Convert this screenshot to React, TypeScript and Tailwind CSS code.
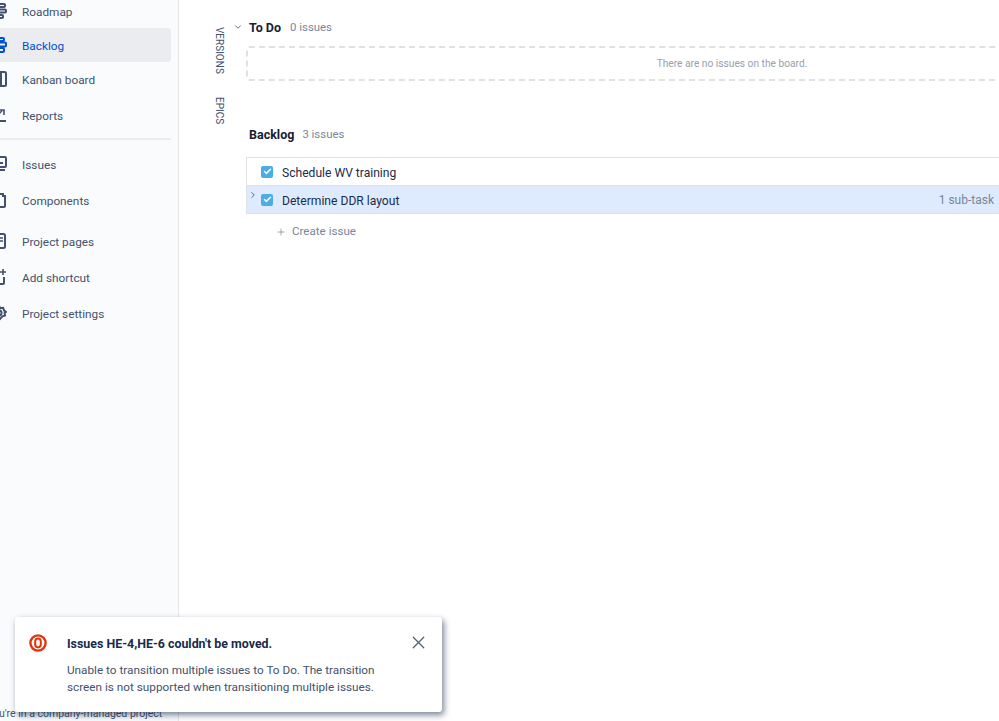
import React from 'react';
import { ChevronDown, ChevronRight, Plus, X, Check } from 'lucide-react';

const FONT = "font-['Roboto','Noto_Sans',sans-serif]";

const Icon: React.FC<{ name: string; color?: string }> = ({ name, color = '#42526E' }) => {
  const common = { width: 16, height: 16, viewBox: '0 0 16 16', fill: 'none', stroke: color, strokeWidth: 2, className: 'shrink-0' };
  switch (name) {
    case 'roadmap':
      return (
        <svg {...common}>
          <rect x="1" y="1" width="13" height="3" rx="1" />
          <rect x="5" y="6.5" width="10" height="3" rx="1" />
          <rect x="2" y="12" width="10" height="3" rx="1" />
        </svg>
      );
    case 'backlog':
      return (
        <svg {...common}>
          <rect x="3" y="1" width="10" height="3" rx="1" />
          <rect x="1" y="5.5" width="14" height="4" rx="1" />
          <rect x="3" y="11" width="10" height="4" rx="1" />
        </svg>
      );
    case 'kanban':
      return (
        <svg {...common}>
          <rect x="1" y="1" width="14" height="14" rx="1.5" />
          <path d="M10 1v14" />
        </svg>
      );
    case 'reports':
      return (
        <svg {...common}>
          <path d="M1 2v12h14" />
          <path d="M4 10l7-6M8 3h5v5" strokeWidth="1.6" />
        </svg>
      );
    case 'issues':
      return (
        <svg {...common}>
          <rect x="2" y="1" width="13" height="10" rx="1" />
          <path d="M8 7h4M1 14h13" />
        </svg>
      );
    case 'components':
      return (
        <svg {...common}>
          <path d="M2 4h4V2h6v2h2v10a1 1 0 0 1-1 1H3a1 1 0 0 1-1-1z" />
        </svg>
      );
    case 'pages':
      return (
        <svg {...common}>
          <rect x="2" y="1" width="12" height="14" rx="1.5" />
          <path d="M5 5h7M5 8h7" strokeWidth="1.5" />
        </svg>
      );
    case 'shortcut':
      return (
        <svg {...common}>
          <path d="M7 4H3a1 1 0 0 0-1 1v9a1 1 0 0 0 1 1h9a1 1 0 0 0 1-1V8" />
          <path d="M12 0v6M9 3h6" strokeWidth="1.6" />
        </svg>
      );
    default:
      return (
        <svg {...common}>
          <circle cx="8" cy="8" r="2.5" />
          <path d="M8 1l1.5 2.2 2.7-.4.8 2.5 2 1.7-1.4 1 .4 2.6-2.6.8L8 15l-2.4-3.6-2.6-.8.4-2.6-1.4-1 2-1.7.8-2.5 2.7.4z" />
        </svg>
      );
  }
};

const NavItem: React.FC<{ icon: string; label: string; active?: boolean; className?: string }> = ({ icon, label, active, className }) => (
  <div className={`flex items-center h-[34px] rounded-r-[3px] ${active ? 'bg-[#EBECF0] text-[#0052CC]' : 'text-[#42526E]'} ${className ?? ''}`}>
    <span className="w-[22px] flex justify-end pr-[15px] shrink-0">
      <Icon name={icon} color={active ? '#0052CC' : '#42526E'} />
    </span>
    <span className="text-[11.8px] leading-none pt-[3px]">{label}</span>
  </div>
);

const Tick: React.FC = () => (
  <span className="w-3 h-3 rounded-[2px] bg-[#4BADE8] flex items-center justify-center shrink-0">
    <Check size={9} strokeWidth={4} color="#fff" />
  </span>
);

export default function App() {
  return (
    <div className={`${FONT} relative w-[999px] h-[721px] overflow-hidden bg-white flex`}>
      <aside className="w-[179px] h-full shrink-0 bg-[#FAFBFC] border-r border-[#E4E6EA] pr-[7px] flex flex-col relative">
        <div className="flex flex-col -mt-[6px]">
          <NavItem icon="roadmap" label="Roadmap" />
          <NavItem icon="backlog" label="Backlog" active />
          <NavItem icon="kanban" label="Kanban board" />
          <NavItem icon="reports" label="Reports" className="mt-[2px]" />
          <div className="h-[2px] bg-[#EBECF0] mt-[6px]" />
          <NavItem icon="issues" label="Issues" className="mt-[7px]" />
          <NavItem icon="components" label="Components" className="mt-[2px]" />
          <NavItem icon="pages" label="Project pages" className="mt-[7px]" />
          <NavItem icon="shortcut" label="Add shortcut" className="mt-[2px]" />
          <NavItem icon="settings" label="Project settings" className="mt-[2px]" />
        </div>
        <div className="mt-auto h-[14px] -ml-[13px] text-[10.5px] leading-[14px] text-[#42526E] whitespace-nowrap">
          You're in a company-managed project
        </div>
      </aside>

      <main className="flex-1 min-w-0 flex">
        <div className="w-[67px] shrink-0 pt-[27px] flex flex-col items-end pr-[22px] text-[10px] leading-none text-[#42526E]">
          <span className="[writing-mode:vertical-rl]">VERSIONS</span>
          <span className="[writing-mode:vertical-rl] mt-[23px]">EPICS</span>
        </div>
        <div className="flex-1 min-w-0 -mr-[20px]">
          <div className="relative flex items-center h-[18px] mt-[19px] pl-[3px] text-[12.5px]">
            <ChevronDown size={10} strokeWidth={2} color="#42526E" className="absolute -left-[13px] top-[3px]" />
            <span className="font-bold text-[#172033]">To Do</span>
            <span className="ml-[9px] text-[11.4px] text-[#7A869A]">0 issues</span>
          </div>
          <div className="mt-[9px] h-[35px] w-[972px] border-2 border-dashed border-[#DFE1E6] rounded-[3px] flex items-center justify-center text-[10.2px] text-[#97A0AF] pt-[1px]">
            There are no issues on the board.
          </div>
          <div className="flex items-center h-[18px] mt-[45px] pl-[3px] text-[12.5px]">
            <span className="font-bold text-[#172033]">Backlog</span>
            <span className="ml-[8px] text-[11.4px] text-[#7A869A]">3 issues</span>
          </div>
          <div className="mt-[13px] border-t border-b border-l border-[#DFE1E6]">
            <div className="h-[28px] flex items-center pl-[14px] gap-[9px] text-[12.1px] text-[#172B4D] border-b border-[#DFE1E6]">
              <Tick />
              <span className="pt-[3px]">Schedule WV training</span>
            </div>
            <div className="relative h-[27px] flex items-center pl-[14px] gap-[9px] text-[12.1px] text-[#172B4D] bg-[#DEEBFF] pr-[5px]">
              <ChevronRight size={10} strokeWidth={2} color="#42526E" className="absolute left-[1px] top-[4px]" />
              <Tick />
              <span className="pt-[3px]">Determine DDR layout</span>
              <span className="ml-auto text-[12px] text-[#7A869A] mr-[20px]">1 sub-task</span>
            </div>
          </div>
          <div className="flex items-center h-[18px] mt-[9px] pl-[30px] text-[11.6px] text-[#7A869A]">
            <Plus size={10} strokeWidth={1.5} color="#6B778C" />
            <span className="ml-[6px]">Create issue</span>
          </div>
        </div>
      </main>

      <div className="absolute left-[15px] top-[617px] w-[427px] h-[95px] bg-white rounded-[3px] shadow-[2px_3px_6px_rgba(9,30,66,0.55)] pl-[52px] pr-[40px] pt-[18px]">
        <svg width="18" height="18" viewBox="0 0 18 18" className="absolute left-[14px] top-[17px]">
          <circle cx="9" cy="9" r="7.6" fill="none" stroke="#DE350B" strokeWidth="2.4" />
          <rect x="6.2" y="4.6" width="5.6" height="8.8" rx="2.8" fill="none" stroke="#DE350B" strokeWidth="2" />
        </svg>
        <X size={21} strokeWidth={1.4} color="#505F79" className="absolute right-[13px] top-[15px]" />
        <div className="text-[12.4px] leading-[17px] font-bold text-[#172B4D]">Issues HE-4,HE-6 couldn't be moved.</div>
        <div className="mt-[10px] text-[11.75px] leading-[17px] text-[#42526E]">
          Unable to transition multiple issues to To Do. The transition screen is not supported when transitioning multiple issues.
        </div>
      </div>
    </div>
  );
}
